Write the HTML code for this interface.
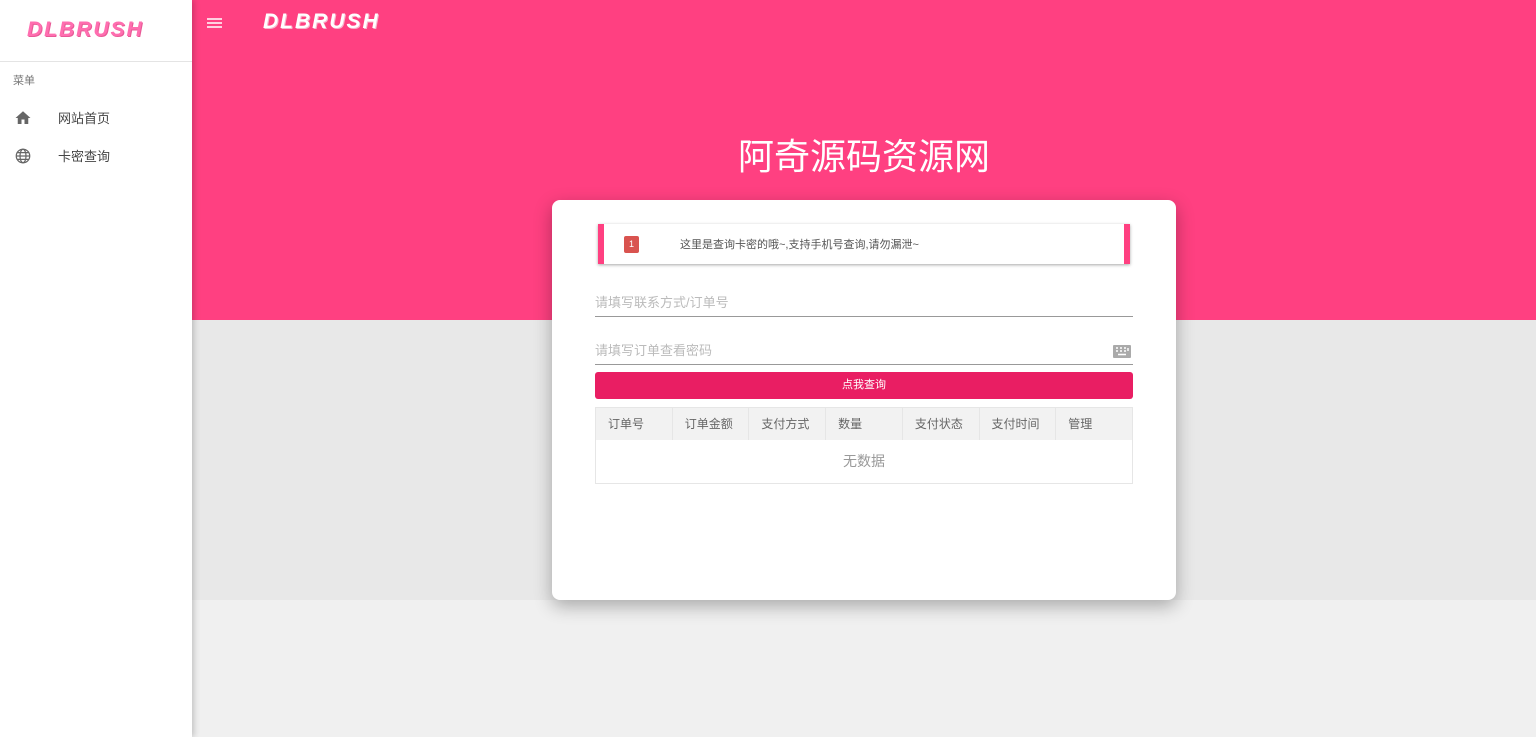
<!DOCTYPE html>
<html><head><meta charset="utf-8"><style>
*{margin:0;padding:0;box-sizing:border-box}
body{width:1536px;height:737px;overflow:hidden;background:#f0f0f0;font-family:"Liberation Sans","Noto Sans CJK SC",sans-serif;position:relative}
.side{position:absolute;left:0;top:0;width:192px;height:737px;background:#fff;box-shadow:2px 0 6px rgba(0,0,0,.2);z-index:5}
.logo{font-family:"Liberation Sans",sans-serif;font-weight:900;font-style:italic;letter-spacing:2px}
.side .logo{position:absolute;left:27px;top:18px;font-size:21px;color:#ff6eb0;text-shadow:1px 1px 0 #e85a96}
.side .hr{position:absolute;top:61px;left:0;right:0;border-top:1px solid #e4e4e4}
.side .cap{position:absolute;left:13px;top:72px;font-size:11px;color:#777}
.item{position:absolute;left:0;width:192px;height:38px;font-size:13px;color:#444}
.item span{position:absolute;left:58px;top:8px}
.item svg{position:absolute;left:14px;top:9px}
.top{position:absolute;left:192px;top:0;right:0;height:320px;background:#ff4081}
.mid{position:absolute;left:192px;top:320px;right:0;height:280px;background:#e8e8e8}
.ham{position:absolute;left:207px;top:17px}
.top .logo{position:absolute;left:71px;top:10px;font-size:21px;color:#fff;text-shadow:1px 1px 0 #f7b6cc}
h1{position:absolute;left:192px;right:0;top:128px;text-align:center;color:#fff;font-weight:normal;font-size:36px}
.card{position:absolute;left:552px;top:200px;width:624px;height:400px;background:#fff;border-radius:8px;box-shadow:0 6px 18px rgba(0,0,0,.3);z-index:2}
.alert{position:absolute;left:46px;top:24px;width:532px;height:40px;border-left:6px solid #ff4081;border-right:6px solid #ff4081;box-shadow:0 1px 3px rgba(0,0,0,.35);background:#fff}
.badge{position:absolute;left:20px;top:12px;width:15px;height:17px;background:#d9534f;color:#fff;font-size:9px;text-align:center;line-height:17px;border-radius:2px}
.alert .t{position:absolute;left:76px;top:12px;font-size:11px;color:#555}
.inp{position:absolute;left:43px;width:538px;border-bottom:1px solid #999;font-size:13px;color:#bbb;height:30px;padding-top:5px}
.btn{position:absolute;left:43px;top:172px;width:538px;height:27px;background:#e91e63;border-radius:3px;color:#fff;font-size:11px;text-align:center;line-height:27px}
table{position:absolute;left:43px;top:207px;width:538px;border-collapse:collapse;border:1px solid #e6e6e6;font-size:12px;color:#666}
th{background:#f2f2f2;font-weight:normal;text-align:left;padding-left:12px;height:32px;border-right:1px solid #e6e6e6;width:76px}
td{height:44px;text-align:center;font-size:14px;color:#999}
</style></head><body>
<div class="side">
<div class="logo">DLBRUSH</div>
<div class="hr"></div>
<div class="cap">菜单</div>
<div class="item" style="top:100px"><svg width="18" height="18" viewBox="0 0 24 24"><path d="M10 20v-6h4v6h5v-8h3L12 3 2 12h3v8z" fill="#666"/></svg><span>网站首页</span></div>
<div class="item" style="top:138px"><svg width="18" height="18" viewBox="0 0 24 24" fill="none" stroke="#666" stroke-width="1.6"><circle cx="12" cy="12" r="9"/><ellipse cx="12" cy="12" rx="4" ry="9"/><path d="M3 12h18M4.5 7.5h15M4.5 16.5h15"/></svg><span>卡密查询</span></div>
</div>
<div class="top"><div class="logo">DLBRUSH</div></div>
<svg class="ham" width="15" height="12" viewBox="0 0 15 12"><path d="M0 2h15M0 6h15M0 10h15" stroke="#fff" stroke-width="1.5"/></svg>
<div class="mid"></div>
<h1>阿奇源码资源网</h1>
<div class="card">
<div class="alert"><div class="badge">1</div><div class="t">这里是查询卡密的哦~,支持手机号查询,请勿漏泄~</div></div>
<div class="inp" style="top:87px">请填写联系方式/订单号</div>
<div class="inp" style="top:135px">请填写订单查看密码<svg style="position:absolute;right:2px;top:10px" width="18" height="13" viewBox="0 0 18 13"><rect width="18" height="13" rx="1" fill="#aaa"/><path d="M3 3h2M7 3h2M11 3h2M3 6h2M7 6h2M11 6h2M15 3v3M5 9.5h8" stroke="#fff" stroke-width="1.4"/></svg></div>
<div class="btn">点我查询</div>
<table><tr><th>订单号</th><th>订单金额</th><th>支付方式</th><th>数量</th><th>支付状态</th><th>支付时间</th><th>管理</th></tr><tr><td colspan="7">无数据</td></tr></table>
</div>
</body></html>
